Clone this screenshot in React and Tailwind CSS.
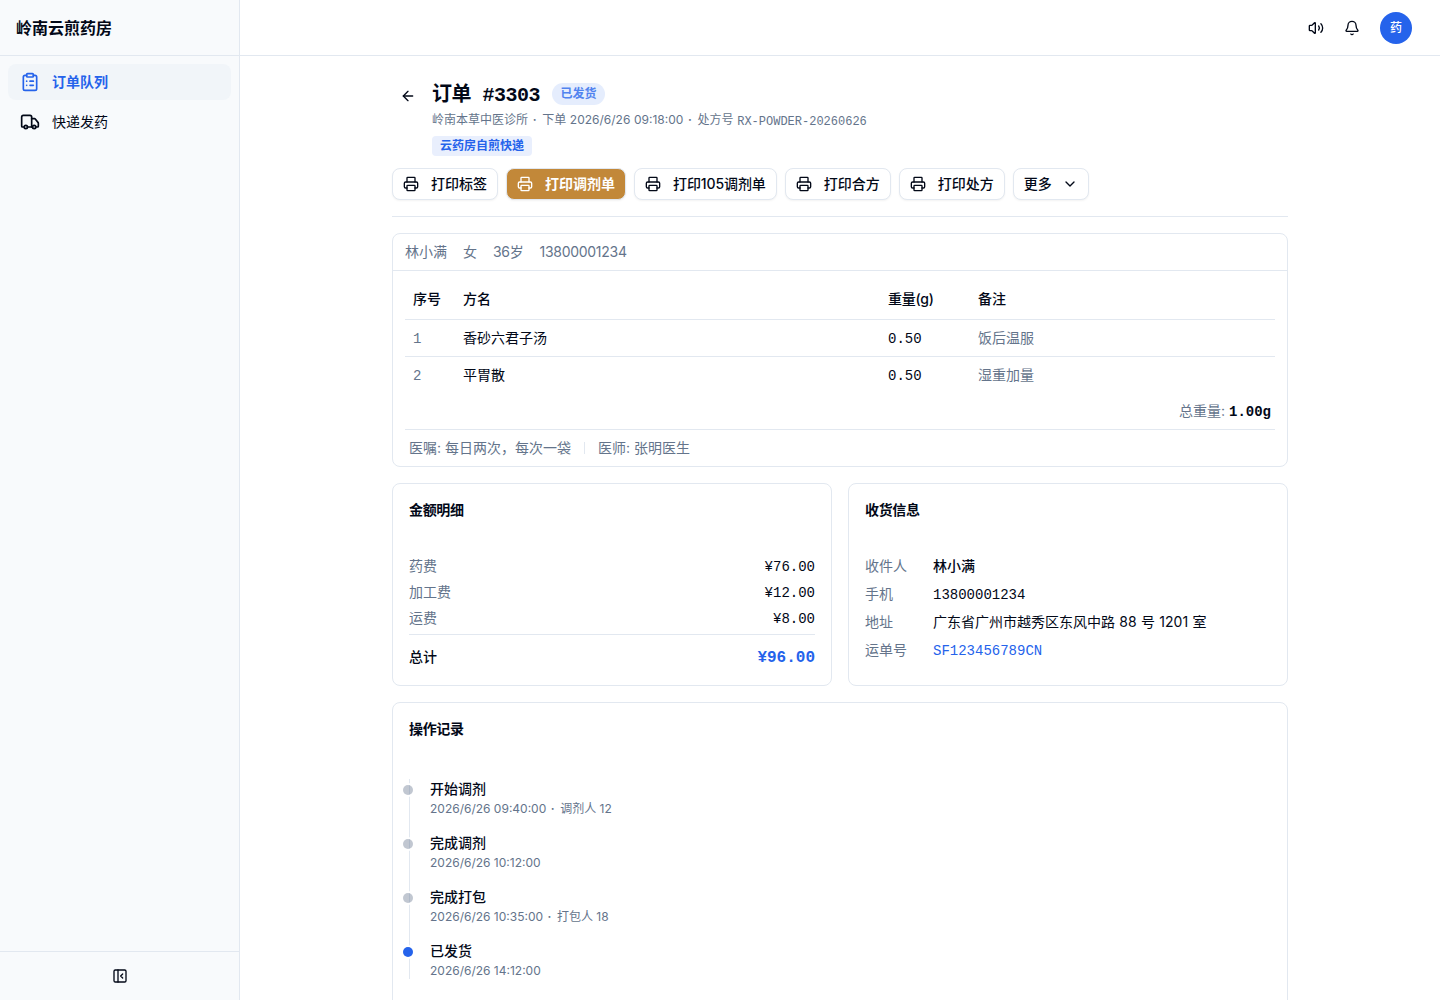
import {
  ArrowLeft,
  Bell,
  ChevronDown,
  ClipboardList,
  PanelLeftClose,
  Printer,
  Truck,
  Volume2,
} from "lucide-react";

const MONO = "font-['Liberation_Mono','Noto_Sans_CJK_SC',monospace]";

const printActions = [
  { label: "打印标签" },
  { label: "打印调剂单", active: true },
  { label: "打印105调剂单", tight: true },
  { label: "打印合方" },
  { label: "打印处方" },
];

const formulas = [
  { id: 1, name: "香砂六君子汤", weight: "0.50", note: "饭后温服" },
  { id: 2, name: "平胃散", weight: "0.50", note: "湿重加量" },
];

const fees = [
  { label: "药费", value: "¥76.00" },
  { label: "加工费", value: "¥12.00" },
  { label: "运费", value: "¥8.00" },
];

const logs = [
  { title: "开始调剂", time: "2026/6/26 09:40:00", operator: "调剂人 12" },
  { title: "完成调剂", time: "2026/6/26 10:12:00" },
  { title: "完成打包", time: "2026/6/26 10:35:00", operator: "打包人 18" },
  { title: "已发货", time: "2026/6/26 14:12:00", current: true },
];

function Dot() {
  return <span className="mr-[2.5px] ml-[1.5px] font-semibold"> · </span>;
}

function Sidebar() {
  return (
    <aside className="flex w-60 shrink-0 flex-col border-r border-[#e2e8f0] bg-[#f8fafc]">
      <div className="flex h-14 items-center border-b border-[#e2e8f0] px-4">
        <span className="text-base font-semibold">岭南云煎药房</span>
      </div>
      <nav className="flex-1 space-y-1 p-2">
        <a className="flex h-9 items-center gap-3 rounded-lg bg-[#f1f5f9] px-3 text-sm font-semibold text-[#2563eb]">
          <ClipboardList className="size-5" />
          订单队列
        </a>
        <a className="flex h-9 items-center gap-3 rounded-lg px-3 text-sm">
          <Truck className="size-5" />
          快递发药
        </a>
      </nav>
      <div className="flex h-[49px] items-center justify-center border-t border-[#e2e8f0]">
        <PanelLeftClose className="size-4" />
      </div>
    </aside>
  );
}

function Topbar() {
  return (
    <header className="flex h-14 shrink-0 items-center justify-end border-b border-[#e2e8f0] pr-7">
      <Volume2 className="size-4" />
      <Bell className="ml-5 size-4" />
      <div className="ml-5 flex size-8 items-center justify-center rounded-full bg-[#2563eb] text-xs font-medium text-white">
        药
      </div>
    </header>
  );
}

function OrderHeader() {
  return (
    <div className="border-b border-[#e2e8f0] pb-4">
      <div className="flex items-start gap-2">
        <button type="button" className="flex size-8 items-center justify-center">
          <ArrowLeft className="size-4" />
        </button>
        <div>
          <div className="flex h-7 items-center gap-3">
            <h1
              className={`${MONO} pt-[3px] text-xl leading-7 font-bold tracking-tight whitespace-pre`}
            >
              订单 #3303
            </h1>
            <span className="flex h-[22px] items-center rounded-full bg-[#e5edfd] px-[8.5px] text-xs font-semibold text-[#5183ef]">
              已发货
            </span>
          </div>
          <p className="mt-1 h-4 text-xs whitespace-nowrap text-[#64748b] [word-spacing:0.2px]">
            岭南本草中医诊所
            <Dot />
            下单 2026/6/26 09:18:00
            <Dot />
            处方号{" "}
            <span className={`align-[-1px] ${MONO}`}>RX-POWDER-20260626</span>
          </p>
          <span className="mt-2 flex h-5 w-fit items-center rounded bg-[#e9effd] px-2 text-xs font-semibold text-[#2563eb]">
            云药房自煎快递
          </span>
        </div>
      </div>

      <div className="mt-3 flex gap-2">
        {printActions.map((action) => (
          <button
            key={action.label}
            type="button"
            className={`flex h-8 items-center gap-3 rounded-lg border border-[#e2e8f0] px-2.5 text-sm shadow-xs ${
              action.active ? "bg-[#c28839] font-semibold text-white" : "bg-white font-medium"
            } ${action.tight ? "tracking-[-0.1px]" : ""}`}
          >
            <Printer className="size-4" />
            {action.label}
          </button>
        ))}
        <button
          type="button"
          className="flex h-8 items-center gap-2.5 rounded-lg border border-[#e2e8f0] bg-white px-2.5 text-sm font-medium shadow-xs"
        >
          更多
          <ChevronDown className="size-4" />
        </button>
      </div>
    </div>
  );
}

function Prescription() {
  return (
    <section className="mt-4 rounded-lg border border-[#e2e8f0] text-sm">
      <div className="flex gap-4 border-b border-[#e2e8f0] px-3 py-2 text-[#64748b]">
        <span>林小满</span>
        <span>女</span>
        <span className="tracking-[-0.02em]">36岁</span>
        <span className="tracking-[-0.02em]">13800001234</span>
      </div>
      <div className="px-3 pt-2">
        <table className="w-full table-fixed text-left">
          <thead>
            <tr className="h-10 border-b border-[#e2e8f0]">
              <th className="w-[50px] px-2 font-medium">序号</th>
              <th className="w-[425px] px-2 font-medium">方名</th>
              <th className="w-[90px] px-2 font-medium tracking-[-0.02em]">重量(g)</th>
              <th className="px-2 font-medium">备注</th>
            </tr>
          </thead>
          <tbody>
            {formulas.map((item) => (
              <tr key={item.id} className="h-[37px] border-b border-[#e2e8f0] last:border-0">
                <td className={`px-2 pt-0.5 text-[#64748b] ${MONO}`}>{item.id}</td>
                <td className="px-2">{item.name}</td>
                <td className={`px-2 pt-0.5 ${MONO}`}>{item.weight}</td>
                <td className="px-2 text-[#64748b]">{item.note}</td>
              </tr>
            ))}
          </tbody>
        </table>
        <div className="box-content flex h-9 items-center justify-end gap-1 border-b border-[#e2e8f0] px-1">
          <span className="text-[#64748b]">总重量:</span>
          <span className={`pt-0.5 font-bold ${MONO}`}>1.00g</span>
        </div>
        <div className="flex h-9 items-center px-1 text-[#64748b]">
          <span>医嘱: 每日两次，每次一袋</span>
          <span className="mx-[13px] h-3 w-px bg-[#e2e8f0]" />
          <span>医师: 张明医生</span>
        </div>
      </div>
    </section>
  );
}

function Card({ title, className = "", children }) {
  return (
    <section className={`rounded-lg border border-[#e2e8f0] p-4 text-sm ${className}`}>
      <h2 className="font-semibold tracking-tight">{title}</h2>
      {children}
    </section>
  );
}

function InfoRow({ label, children }) {
  return (
    <div className="flex h-5 items-center">
      <span className="w-[68px] text-[#64748b]">{label}</span>
      {children}
    </div>
  );
}

export default function App() {
  return (
    <div className="flex h-screen overflow-hidden bg-white font-[Inter,'Noto_Sans_CJK_SC',sans-serif] text-[#020817]">
      <Sidebar />
      <div className="flex min-w-0 flex-1 flex-col">
        <Topbar />
        <main className="flex-1 overflow-hidden pt-6">
          <div className="mx-auto w-[896px]">
            <OrderHeader />
            <Prescription />

            <div className="mt-4 grid grid-cols-2 gap-4">
              <Card title="金额明细">
                <div className="mt-9 space-y-1.5">
                  {fees.map((fee) => (
                    <div key={fee.label} className="flex h-5 items-center justify-between">
                      <span className="text-[#64748b]">{fee.label}</span>
                      <span className={`pt-0.5 ${MONO}`}>{fee.value}</span>
                    </div>
                  ))}
                  <div className="flex h-[35px] items-center justify-between border-t border-[#e2e8f0] pt-2.5 font-medium">
                    <span>总计</span>
                    <span className={`pt-0.5 text-base font-bold text-[#2563eb] ${MONO}`}>
                      ¥96.00
                    </span>
                  </div>
                </div>
              </Card>

              <Card title="收货信息">
                <div className="mt-9 space-y-2">
                  <InfoRow label="收件人">
                    <span className="font-medium">林小满</span>
                  </InfoRow>
                  <InfoRow label="手机">
                    <span className={`pt-0.5 ${MONO}`}>13800001234</span>
                  </InfoRow>
                  <InfoRow label="地址">
                    <span className="[word-spacing:0.4px]">
                      广东省广州市越秀区东风中路 88 号 1201 室
                    </span>
                  </InfoRow>
                  <InfoRow label="运单号">
                    <span className={`pt-0.5 text-[#2563eb] ${MONO}`}>SF123456789CN</span>
                  </InfoRow>
                </div>
              </Card>
            </div>

            <Card title="操作记录" className="mt-4 h-80">
              <ol className="mt-10 space-y-4 border-l border-[#e2e8f0] pl-5">
                {logs.map((log) => (
                  <li key={log.title} className="relative">
                    <span
                      className={`absolute top-1.5 -left-[27px] size-2.5 rounded-full ring-2 ring-white ${
                        log.current ? "bg-[#2563eb]" : "bg-[#64748b]/40"
                      }`}
                    />
                    <p className="font-medium">{log.title}</p>
                    <p className="mt-0.5 text-xs text-[#64748b]">
                      {log.time}
                      {log.operator && <Dot />}
                      {log.operator}
                    </p>
                  </li>
                ))}
              </ol>
            </Card>
          </div>
        </main>
      </div>
    </div>
  );
}
